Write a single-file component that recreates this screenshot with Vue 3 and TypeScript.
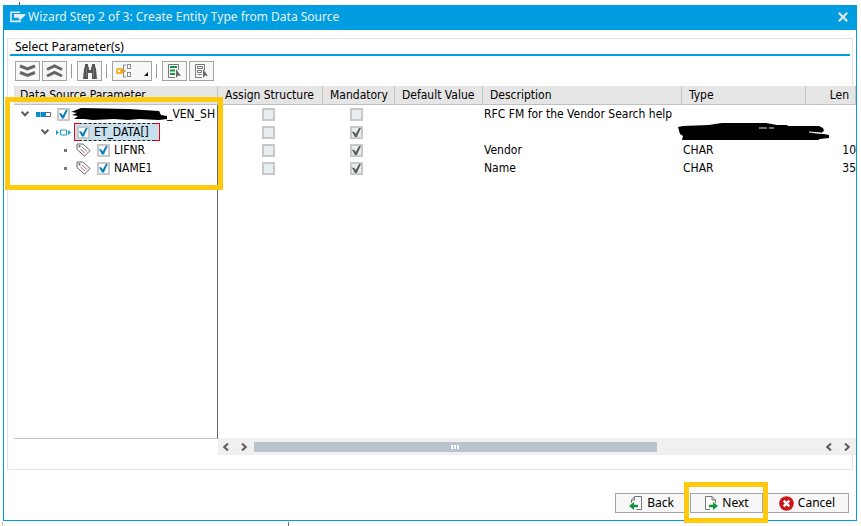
<script setup lang="ts">
import { ref } from 'vue'

type NodeKind = 'module' | 'table' | 'field'

interface ParameterRow {
  id: string
  name: string
  kind: NodeKind
  level: number
  redacted: boolean
  selected: boolean
  checked: boolean
  assign: boolean
  mandatory: boolean
  description: string
  type: string
  typeRedacted: boolean
  len: string
}

const rows = ref<ParameterRow[]>([
  { id: 'root', name: '_VEN_SH', kind: 'module', level: 0, redacted: true, selected: false, checked: true, assign: false, mandatory: false, description: 'RFC FM for the Vendor Search help', type: '', typeRedacted: false, len: '' },
  { id: 'data', name: 'ET_DATA[]', kind: 'table', level: 1, redacted: false, selected: true, checked: true, assign: false, mandatory: true, description: '', type: '', typeRedacted: true, len: '' },
  { id: 'lifnr', name: 'LIFNR', kind: 'field', level: 2, redacted: false, selected: false, checked: true, assign: false, mandatory: true, description: 'Vendor', type: 'CHAR', typeRedacted: false, len: '10' },
  { id: 'name1', name: 'NAME1', kind: 'field', level: 2, redacted: false, selected: false, checked: true, assign: false, mandatory: true, description: 'Name', type: 'CHAR', typeRedacted: false, len: '35' },
])
</script>

<template>
  <main class="page">
    <section class="dialog" aria-labelledby="dialog-title">
      <header class="titlebar">
        <svg class="title-icon" width="16" height="12" viewBox="0 0 16 12" aria-hidden="true">
          <path d="M10 1.200H1v9.200h9V9" fill="none" stroke="#e4eef4" stroke-width="1.600" />
          <path d="M4 3h11.500v1L11 8.500H8.500V6.500L4 7z" fill="#e4eef4" />
        </svg>
        <h1 id="dialog-title">Wizard Step 2 of 3: Create Entity Type from Data Source</h1>
        <button class="close" type="button" aria-label="Close">
          <svg width="10" height="10" viewBox="0 0 10 10"><path d="M.8.8l8.4 8.4M9.2.8L.8 9.2" stroke="#e2e6e8" stroke-width="2.2" /></svg>
        </button>
      </header>

      <div class="panel">
        <h2>Select Parameter(s)</h2>

        <div class="toolbar" role="toolbar">
          <button type="button" class="tool" aria-label="Expand all">
            <svg width="17" height="14" viewBox="0 0 17 14"><path d="M1 2l7.500 3L16 2M1 8.500l7.500 3L16 8.500" fill="none" stroke="#666" stroke-width="3" /></svg>
          </button>
          <button type="button" class="tool" aria-label="Collapse all">
            <svg width="17" height="14" viewBox="0 0 17 14"><path d="M1 5.500l7.500-3.500L16 5.500M1 12l7.500-3.500L16 12" fill="none" stroke="#666" stroke-width="3" /></svg>
          </button>
          <i class="sep"></i>
          <button type="button" class="tool" aria-label="Find">
            <svg width="16" height="15" viewBox="0 0 16 15"><path d="M3 0h3v2l1 2v2h2V4l1-2V0h3v2l1 3 1 10h-5V9H6v6H1L2 5l1-3z" fill="#555" /><path d="M4.500 4v9M11.500 4v9" stroke="#777" /></svg>
          </button>
          <i class="sep"></i>
          <button type="button" class="tool wide" aria-label="Layout options">
            <svg width="16" height="14" viewBox="0 0 16 14"><path d="M10 1H7.500v12H10M7.500 7H10M11 .5h4M11 4.500h4M11 8.500h4M11 12.500h4M11.500.5v4M14.500.5v4M11.500 8.500v4M14.500 8.500v4" fill="none" stroke="#8a8a8a" /><path d="M1 5h5v4H1zM4 7h5" fill="#fff" stroke="#f0a400" stroke-width="1.500" /></svg>
            <svg class="corner" width="4" height="4" viewBox="0 0 4 4"><path d="M4 0v4H0z" fill="#111" /></svg>
          </button>
          <i class="sep"></i>
          <button type="button" class="tool" aria-label="Select all">
            <svg width="15" height="15" viewBox="0 0 15 15"><path d="M8 13.500H1.500v-13h10V6" fill="none" stroke="#777" /><path d="M3 3h7M3 6.500h5M3 10h5" stroke="#1a9148" stroke-width="2" /><path d="M9 5v9l2-2.500L14 12z" fill="#666" /></svg>
          </button>
          <button type="button" class="tool" aria-label="Deselect all">
            <svg width="15" height="15" viewBox="0 0 15 15"><path d="M8 13.500H1.500v-13h9V6" fill="none" stroke="#777" /><path d="M3.500 2.500h5v2h-5zM3.500 6.500h4v2h-4zM3.500 10.500h4" fill="none" stroke="#777" /><path d="M9 5v9l2-2.500L14 12z" fill="#666" /></svg>
          </button>
        </div>

        <div class="grid">
          <table>
            <colgroup>
              <col class="c-tree" /><col class="c-assign" /><col class="c-mandatory" /><col class="c-default" /><col class="c-desc" /><col class="c-type" /><col />
            </colgroup>
            <thead>
              <tr>
                <th>Data Source Parameter</th>
                <th>Assign Structure</th>
                <th>Mandatory</th>
                <th>Default Value</th>
                <th>Description</th>
                <th>Type</th>
                <th class="num">Len</th>
              </tr>
            </thead>
            <tbody>
              <tr v-for="row in rows" :key="row.id">
                <td class="tree">
                  <div class="node" :class="'level-' + row.level">
                    <span class="twisty">
                      <svg v-if="row.kind !== 'field'" width="8" height="6" viewBox="0 0 8 6"><path d="M.7.700L4 4.200 7.300.700" fill="none" stroke="#5c5c5c" stroke-width="2" /></svg>
                      <i v-else class="dot"></i>
                    </span>
                    <span class="kind">
                      <svg v-if="row.kind === 'module'" width="15" height="5" viewBox="0 0 15 5"><path d="M0 0h10v5H0z" fill="#078dc8" /><path d="M4.500 0v5" stroke="#7fc4e4" /><path d="M10 .5h4.500v4H10" fill="#fff" stroke="#667" /></svg>
                      <svg v-else-if="row.kind === 'table'" width="15" height="7" viewBox="0 0 15 7"><path d="M4.500 1h6v5h-6z" fill="#fff" stroke="#159bd3" /><path d="M0 1l3 2.500L0 6zM12 1l3 2.500L12 6z" fill="#159bd3" /></svg>
                      <svg v-else width="15" height="14" viewBox="0 0 15 14"><path d="M1 1h6l7 6.500L8.500 13.200 1 6.500z" fill="#fff" stroke="#666" /><circle cx="3.500" cy="3.300" r="1.100" fill="#555" /><path d="M6 4l5 4.500M4.500 6l4.500 4.200" stroke="#9a7770" /></svg>
                    </span>
                    <label class="pick" :class="{ selected: row.selected }">
                      <input v-model="row.checked" type="checkbox" class="box" :aria-label="row.name" />
                      <svg v-if="row.redacted" class="scribble" width="97" height="13" viewBox="0 0 97 13" aria-hidden="true"><path d="M1 4L11 0l48 1 14 1 16 1 2 4 6 1v3l-8 1-20-1-11 1-14-1-21 1-9-1H4l4-3-6-1 5-2-5-1z" fill="#000" /></svg>
                      <span>{{ row.name }}</span>
                    </label>
                  </div>
                </td>
                <td class="mid"><input v-model="row.assign" type="checkbox" class="box" disabled :aria-label="row.name + ' assign structure'" /></td>
                <td class="mid"><input v-model="row.mandatory" type="checkbox" class="box" disabled :aria-label="row.name + ' mandatory'" /></td>
                <td></td>
                <td>{{ row.description }}</td>
                <td class="type">
                  <svg v-if="row.typeRedacted" class="type-scribble" width="152" height="17" viewBox="0 0 152 17" aria-hidden="true"><path d="M0 4l5-1 26-1 6-1 7-1h44l11 2h10l1 1h31l4 2 1 3-3 2h-9l12 1 5 1v3l-9 1-4 2-94 1-8-2H19l-5 2-7 1-3-3 1-4-3-2z" fill="#000" /><path d="M81 5h8M91 5h5" stroke="#ddd" /><path d="M131 9l12 1" stroke="#fff" /></svg>
                  {{ row.type }}
                </td>
                <td class="num">{{ row.len }}</td>
              </tr>
            </tbody>
          </table>
          <div class="filler"></div>
          <div class="scrollbar">
            <button type="button" aria-label="Scroll left"><svg width="6" height="8" viewBox="0 0 6 8"><path d="M5 .5L1.300 4 5 7.500" fill="none" stroke="#5d5d5d" stroke-width="2" /></svg></button>
            <button type="button" aria-label="Scroll right"><svg width="6" height="8" viewBox="0 0 6 8"><path d="M1 .5L4.700 4 1 7.500" fill="none" stroke="#5d5d5d" stroke-width="2" /></svg></button>
            <div class="track"><div class="thumb"><i></i><i></i><i></i></div></div>
            <button type="button" aria-label="Page left"><svg width="6" height="8" viewBox="0 0 6 8"><path d="M5 .5L1.300 4 5 7.500" fill="none" stroke="#5d5d5d" stroke-width="2" /></svg></button>
            <button type="button" aria-label="Page right"><svg width="6" height="8" viewBox="0 0 6 8"><path d="M1 .5L4.700 4 1 7.500" fill="none" stroke="#5d5d5d" stroke-width="2" /></svg></button>
          </div>
          <div class="callout tree-callout"></div>
        </div>
      </div>

      <footer class="actions">
        <button type="button" class="action">
          <svg width="14" height="15" viewBox="0 0 14 15"><path d="M5.500.5h7v13h-5M2.500 7V4l3-3.500V4h-3" fill="#fff" stroke="#777" /><path d="M0 10l5-4v2.700h4v2.600H5V14z" fill="#15923e" /></svg>
          <span>Back</span>
        </button>
        <div class="next-wrap">
          <button type="button" class="action">
            <svg width="14" height="15" viewBox="0 0 14 15"><path d="M6 13.500H1.500V.5H8L11.500 4v3M8 .5V4h3.500" fill="#fff" stroke="#777" /><path d="M14 10L9 6v2.700H5v2.600h4V14z" fill="#15923e" /></svg>
            <span>Next</span>
          </button>
          <div class="callout next-callout"></div>
        </div>
        <button type="button" class="action cancel">
          <svg width="15" height="15" viewBox="0 0 15 15"><circle cx="7.500" cy="7.500" r="7.300" fill="#cb161c" /><path d="M4.700 4.700l5.600 5.600M10.300 4.700l-5.600 5.600" stroke="#fff" stroke-width="2.400" /></svg>
          <span>Cancel</span>
        </button>
      </footer>
    </section>
  </main>
</template>

<style>
body {
  background: #fff;
}
</style>

<style scoped>
* {
  box-sizing: border-box;
}
.page {
  position: relative;
  display: flex;
  min-height: 100vh;
  padding: 5px 4px 5px 3px;
  font-family: "Noto Sans", sans-serif;
  font-size: 12px;
  line-height: 18px;
  color: #000;
}
/* Edges of the window that lies behind the dialog */
.page::before {
  content: "";
  position: absolute;
  top: 2px;
  left: 19px;
  width: 1px;
  height: 3px;
  background: #555;
}
.page::after {
  content: "";
  position: absolute;
  bottom: 0;
  left: 2px;
  width: 287px;
  height: 4px;
  box-sizing: border-box;
  border-left: 1px solid #c4c4c4;
  border-right: 1px solid #666;
}
.dialog {
  display: flex;
  flex: 1;
  flex-direction: column;
  min-width: 0;
  border: 1px solid #009de0;
  border-top: 0;
}
button {
  display: flex;
  align-items: center;
  justify-content: center;
  margin: 0;
  padding: 0;
  border: 0;
  background: none;
  font: inherit;
  color: inherit;
}
svg {
  flex: none;
  display: block;
}
.titlebar {
  display: flex;
  align-items: center;
  gap: 2px;
  height: 25px;
  padding: 0 8px 2px 6px;
  background: #009de0;
  color: #e8f2f8;
}
h1,
h2 {
  margin: 0;
  font-size: 12px;
  font-weight: 400;
  white-space: nowrap;
}
.titlebar h1 {
  flex: 1;
}
.panel {
  display: flex;
  flex: 1;
  flex-direction: column;
  margin: 8px 3px 0;
  border: 1px solid #e3e3e3;
  padding: 0 2px 14px;
}
h2 {
  height: 17px;
  padding-left: 5px;
  line-height: 16px;
  border-bottom: 2px solid #009de0;
}
.toolbar {
  display: flex;
  align-items: center;
  gap: 2px;
  padding: 5px 5px;
}
.tool {
  position: relative;
  width: 25px;
  height: 20px;
  border: 1px solid #a3a3a3;
  background: #f7f7f7;
}
.tool.wide {
  width: 40px;
  justify-content: flex-start;
  padding-left: 3px;
}
.corner {
  position: absolute;
  right: 3px;
  bottom: 4px;
}
.sep {
  width: 1px;
  height: 14px;
  margin: 0 3px 0 2px;
  background: #999;
}
.grid {
  position: relative;
  display: flex;
  flex: 1;
  flex-direction: column;
  margin: 0 -6px 0 4px;
  background: #fff;
}
table {
  width: 100%;
  table-layout: fixed;
  border-collapse: separate;
  border-spacing: 0;
  font-family: "DejaVu Sans Condensed", "DejaVu Sans", sans-serif;
  font-stretch: condensed;
}
.c-tree { width: 204px; }
.c-assign { width: 105px; }
.c-mandatory { width: 72px; }
.c-default { width: 88px; }
.c-desc { width: 199px; }
.c-type { width: 124px; }
th {
  height: 19px;
  padding: 1px 6px 0 7px;
  border-right: 1px solid #c4c4c4;
  border-bottom: 1px solid #c0c0c0;
  background: #e5e5e5;
  font-weight: 400;
  line-height: 17px;
  text-align: left;
  white-space: nowrap;
}
th:first-child {
  padding-left: 6px;
}
td {
  height: 18px;
  padding: 0 1px;
  white-space: nowrap;
}
td.tree {
  border-right: 1px solid #666;
}
.num {
  text-align: right;
}
td.num {
  padding: 0;
}
td.mid .box {
  margin: 3px auto 0;
}
td.mid {
  vertical-align: top;
  padding-right: 6px;
}
td.type {
  position: relative;
}
.type-scribble {
  position: absolute;
  left: -4px;
  top: 0;
}
.node {
  display: flex;
  align-items: center;
  height: 18px;
  padding-left: 4px;
}
.level-1 {
  padding-left: 24px;
}
.level-2 {
  padding-left: 44px;
}
.twisty {
  display: flex;
  justify-content: center;
  width: 12px;
}
.dot {
  width: 3px;
  height: 3px;
  background: #777;
}
.kind {
  display: flex;
  width: 18px;
  padding-left: 1px;
  margin: 0 4px;
}
.pick {
  position: relative;
  display: flex;
  align-items: center;
  gap: 4px;
  height: 18px;
}
.pick.selected {
  min-width: 86px;
  padding: 0 2px 0 3px;
  margin-left: -3px;
  background: #c8dfed;
  outline: 1px dashed #222;
  outline-offset: -1px;
}
.pick.selected::before,
.pick.selected::after {
  content: "";
  position: absolute;
  top: 0;
  bottom: 0;
  width: 5px;
  border: 1px solid #e30613;
}
.pick.selected::before {
  left: 0;
  border-right: 0;
}
.pick.selected::after {
  right: 0;
  border-left: 0;
}
.scribble {
  margin: 0 -4px;
}
.box {
  appearance: none;
  display: block;
  flex: none;
  width: 13px;
  height: 13px;
  margin: 0;
  border: 2px solid #c8c8c8;
  background: #fff;
}
.box:checked::before {
  content: "";
  display: block;
  width: 9px;
  height: 9px;
  background: #0a7fbd;
  clip-path: polygon(0 42%, 24% 42%, 42% 68%, 78% 0, 100% 0, 54% 100%, 32% 100%);
}
.box:disabled {
  background: #e8edf0;
}
.box:disabled:checked::before {
  background: #5c5c5c;
}
.filler {
  flex: 1;
  width: 204px;
  border-right: 1px solid #666;
  border-bottom: 1px solid #c4c4c4;
}
.scrollbar {
  display: flex;
  align-items: center;
  height: 17px;
  margin: -1px 0 0 204px;
  background: #f0f0f0;
}
.scrollbar button {
  width: 18px;
  height: 17px;
}
.scrollbar button:first-child {
  margin-left: -1px;
}
.track {
  flex: 1;
}
.thumb {
  display: flex;
  align-items: center;
  justify-content: center;
  gap: 1px;
  width: 71%;
  height: 10px;
  margin-left: 1px;
  background: #b8c3cd;
}
.thumb i {
  width: 2px;
  height: 4px;
  background: #fff;
}
.callout {
  position: absolute;
  border: 5px solid #ffc90e;
  pointer-events: none;
}
.tree-callout {
  top: 11px;
  left: -9px;
  width: 218px;
  height: 93px;
}
.actions {
  display: flex;
  justify-content: flex-end;
  gap: 2px;
  padding: 23px 7px 7px;
}
.action {
  gap: 4px;
  width: 73px;
  height: 20px;
  border: 1px solid #a3a3a3;
  background: #f7f7f7;
}
.cancel {
  width: 84px;
}
.next-wrap {
  position: relative;
}
.next-callout {
  inset: -11px -5px -10px -6px;
  z-index: 1;
}
</style>
